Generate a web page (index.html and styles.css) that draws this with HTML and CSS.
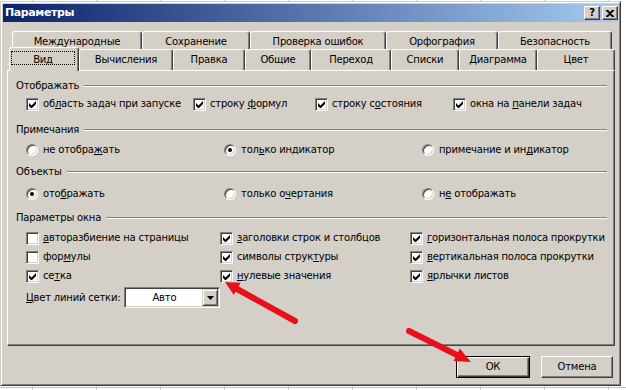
FILE: index.html
```html
<!DOCTYPE html>
<html lang="ru">
<head>
<meta charset="utf-8">
<title>Параметры</title>
<link rel="stylesheet" href="styles.css">
</head>
<body>
<div class="dialog">
  <div class="titlebar">
    <span class="title">Параметры</span>
    <div class="tb-buttons">
      <span class="tb-btn help">?</span>
      <span class="tb-btn close"><svg width="8" height="7" viewBox="0 0 8 7"><path d="M0 0h2l2 2 2-2h2v1L5 3.5 8 6v1H6L4 5 2 7H0V6l3-2.5L0 1z" fill="#000"/></svg></span>
    </div>
  </div>
  <div class="content">
    <div class="tabrow back">
      <div class="tab w130">Международные</div>
      <div class="tab w108">Сохранение</div>
      <div class="tab w136">Проверка ошибок</div>
      <div class="tab w112">Орфография</div>
      <div class="tab w114">Безопасность</div>
    </div>
    <div class="tabrow front">
      <div class="tab sel"><span class="focus">Вид</span></div>
      <div class="tab w94">Вычисления</div>
      <div class="tab w72">Правка</div>
      <div class="tab w66">Общие</div>
      <div class="tab w80">Переход</div>
      <div class="tab w68">Списки</div>
      <div class="tab w78">Диаграмма</div>
      <div class="tab w78">Цвет</div>
    </div>
    <div class="panel">
      <div class="ghead g1"><span>Отображать</span><i class="line"></i></div>
      <div class="row r1 cols4">
        <label class="item"><span class="cb on"></span><span class="t">об<u>л</u>асть задач при запуске</span></label>
        <label class="item"><span class="cb on"></span><span class="t">строку <u>ф</u>ормул</span></label>
        <label class="item"><span class="cb on"></span><span class="t">строку с<u>о</u>стояния</span></label>
        <label class="item"><span class="cb on"></span><span class="t">окна на <u>п</u>анели задач</span></label>
      </div>
      <div class="ghead g2"><span>Примечания</span><i class="line"></i></div>
      <div class="row r2 cols3">
        <label class="item"><span class="rb"></span><span class="t">не отобра<u>ж</u>ать</span></label>
        <label class="item"><span class="rb on"></span><span class="t">тол<u>ь</u>ко индикатор</span></label>
        <label class="item"><span class="rb"></span><span class="t">примечание и ин<u>д</u>икатор</span></label>
      </div>
      <div class="ghead g3"><span>Объекты</span><i class="line"></i></div>
      <div class="row r3 cols3">
        <label class="item"><span class="rb on"></span><span class="t">ото<u>б</u>ражать</span></label>
        <label class="item"><span class="rb"></span><span class="t">только о<u>ч</u>ертания</span></label>
        <label class="item"><span class="rb"></span><span class="t">н<u>е</u> отображать</span></label>
      </div>
      <div class="ghead g4"><span>Параметры окна</span><i class="line"></i></div>
      <div class="grid3">
        <label class="item"><span class="cb"></span><span class="t"><u>а</u>вторазбиение на страницы</span></label>
        <label class="item"><span class="cb on"></span><span class="t"><u>з</u>аголовки строк и столбцов</span></label>
        <label class="item"><span class="cb on"></span><span class="t"><u>г</u>оризонтальная полоса прокрутки</span></label>
        <label class="item"><span class="cb"></span><span class="t">фор<u>м</u>улы</span></label>
        <label class="item"><span class="cb on"></span><span class="t">символы струк<u>т</u>уры</span></label>
        <label class="item"><span class="cb on"></span><span class="t"><u>в</u>ертикальная полоса прокрутки</span></label>
        <label class="item"><span class="cb on"></span><span class="t">се<u>т</u>ка</span></label>
        <label class="item"><span class="cb on"></span><span class="t"><u>н</u>улевые значения</span></label>
        <label class="item"><span class="cb on"></span><span class="t"><u>я</u>рлычки листов</span></label>
      </div>
      <div class="colorrow">
        <span class="clabel"><u>Ц</u>вет линий сетки:</span>
        <div class="combo">
          <span class="cval">Авто</span>
          <span class="cbtn"><svg width="7" height="4" viewBox="0 0 7 4"><path d="M0 0h7L3.5 4z" fill="#000"/></svg></span>
        </div>
      </div>
    </div>
    <div class="buttons">
      <div class="btn default">ОК</div>
      <div class="btn cancel">Отмена</div>
    </div>
  </div>
</div>
<svg class="annot" width="626" height="390" viewBox="0 0 626 390">
  <rect x="9.5" y="64.5" width="66" height="5" rx="2.5" fill="#e8101a"/>
  <line x1="295" y1="321" x2="237" y2="289" stroke="#e8101a" stroke-width="6" stroke-linecap="round"/>
  <polygon points="225,282 240.6,282.7 233.8,294.9" fill="#e8101a"/>
  <line x1="409" y1="331" x2="457" y2="355" stroke="#e8101a" stroke-width="6" stroke-linecap="round"/>
  <polygon points="471,362 453.6,361.1 459.8,348.5" fill="#e8101a"/>
</svg>
</body>
</html>
```

FILE: styles.css
```css
* { box-sizing: border-box; }
html, body { margin: 0; padding: 0; }
body {
  width: 626px;
  height: 390px;
  overflow: hidden;
  position: relative;
  background-color: #fff;
  background-image:
    linear-gradient(180deg, transparent 0 387px, #c0c0c0 387px 388px, transparent 388px),
    repeating-linear-gradient(90deg, transparent 0 32px, #c8c8c8 32px 33px, transparent 33px 64px);
  font-family: "DejaVu Sans", sans-serif;
  font-size: 10px;
  letter-spacing: -0.2px;
  color: #000;
}
.dialog {
  margin-top: 1px;
  width: 621px;
  height: 385px;
  background: #d4d0c8;
  border: 1px solid;
  border-color: #d4d0c8 #404040 #404040 #d4d0c8;
  box-shadow: inset 1px 1px #fff, inset -1px -1px #808080;
  padding: 2px;
}
.titlebar {
  height: 18px;
  background: linear-gradient(90deg, #0a246a, #a6caf0);
  display: flex;
  align-items: center;
  justify-content: space-between;
  padding: 0 0 0 2px;
}
.title {
  color: #fff;
  font-weight: bold;
  font-size: 11px;
  letter-spacing: -0.4px;
  line-height: 18px;
}
.tb-buttons { display: flex; gap: 2px; }
.tb-btn {
  width: 16px;
  height: 14px;
  background: #d4d0c8;
  border: 1px solid;
  border-color: #fff #404040 #404040 #fff;
  box-shadow: inset -1px -1px #808080;
  display: flex;
  align-items: center;
  justify-content: center;
  font-weight: bold;
  font-size: 10px;
  line-height: 12px;
}
.content { display: flex; flex-direction: column; }
.tabrow { display: flex; }
.tabrow.back { margin: 9px 0 0 9px; width: 600px; height: 18px; }
.tabrow.front { margin: 0 0 0 7px; width: 604px; height: 21px; }
.tab {
  flex: none;
  height: 100%;
  background: #d4d0c8;
  border-top: 1px solid #fff;
  border-left: 1px solid #fff;
  border-right: 1px solid #404040;
  box-shadow: inset -1px 0 #808080;
  border-radius: 3px 3px 0 0;
  text-align: center;
  line-height: 16px;
  padding-top: 2px;
  white-space: nowrap;
}
.w130 { width: 130px; }
.w108 { width: 108px; }
.w136 { width: 136px; }
.w112 { width: 112px; }
.w114 { width: 114px; }
.w94 { width: 94px; }
.w72 { width: 72px; }
.w66 { width: 66px; }
.w80 { width: 80px; }
.w68 { width: 68px; }
.w78 { width: 78px; }
.tab.sel {
  width: 70px;
  height: 24px;
  margin: -2px 0 0 -1px;
  position: relative;
  z-index: 2;
  padding: 3px 2px 0 1px;
}
.focus {
  display: block;
  height: 14px;
  line-height: 14px;
  padding-top: 1px;
  border: 1px dotted #000;
  margin-right: 1px;
}
.panel {
  margin-left: 4px;
  width: 608px;
  height: 276px;
  border: 1px solid;
  border-color: #fff #404040 #404040 #fff;
  box-shadow: inset -1px -1px #808080;
  display: flex;
  flex-direction: column;
}
.ghead {
  height: 16px;
  display: flex;
  align-items: center;
  gap: 5px;
  padding: 0 7px 0 8px;
  line-height: 16px;
}
.ghead .line {
  flex: 1;
  height: 2px;
  border-top: 1px solid #808080;
  border-bottom: 1px solid #fff;
}
.g1 { margin-top: 7px; }
.g2 { margin-top: 10px; }
.g3 { margin-top: 6px; }
.g4 { margin-top: 8px; }
.row { height: 16px; display: grid; padding-left: 18px; }
.r1 { margin-top: 2px; grid-template-columns: 167px 122px 138px auto; }
.r2 { margin-top: 4px; grid-template-columns: 198px 198px auto; }
.r3 { margin-top: 6px; grid-template-columns: 198px 198px auto; }
.grid3 {
  margin-top: 4px;
  padding-left: 18px;
  display: grid;
  grid-template-columns: 194px 190px auto;
  grid-auto-rows: 16px;
  row-gap: 3px;
}
.item {
  display: flex;
  align-items: center;
  gap: 4px;
  line-height: 16px;
  white-space: nowrap;
}
.cb {
  flex: none;
  width: 13px;
  height: 13px;
  background: #fff;
  border: 1px solid;
  border-color: #808080 #fff #fff #808080;
  box-shadow: inset 1px 1px #404040, inset -1px -1px #d4d0c8;
  position: relative;
}
.cb.on::after {
  content: "";
  position: absolute;
  left: 2px;
  top: 2px;
  width: 7px;
  height: 7px;
  background: no-repeat center / 7px 7px url("data:image/svg+xml,%3Csvg xmlns='http://www.w3.org/2000/svg' width='7' height='7' viewBox='0 0 7 7'%3E%3Cpath d='M0 2v3l2 2h1l4-4V0L2.5 4.5z' fill='%23000'/%3E%3C/svg%3E");
}
.rb {
  flex: none;
  width: 12px;
  height: 12px;
  margin-right: 1px;
  border-radius: 50%;
  background: #fff;
  border: 1px solid;
  border-color: #808080 #fff #fff #808080;
  box-shadow: inset 1px 1px #404040, inset -1px -1px #d4d0c8;
  position: relative;
}
.rb.on::after {
  content: "";
  position: absolute;
  left: 3px;
  top: 3px;
  width: 4px;
  height: 4px;
  border-radius: 50%;
  background: #000;
}
u { text-decoration: underline; text-underline-offset: 1px; }
.colorrow {
  margin-top: 3px;
  height: 21px;
  padding-left: 18px;
  display: flex;
  align-items: center;
  gap: 4px;
}
.combo {
  width: 96px;
  height: 21px;
  background: #fff;
  border: 1px solid;
  border-color: #808080 #fff #fff #808080;
  box-shadow: inset 1px 1px #404040, inset -1px -1px #d4d0c8;
  display: flex;
  padding: 1px;
}
.cval { flex: 1; text-align: center; line-height: 17px; }
.cbtn {
  width: 16px;
  height: 17px;
  background: #d4d0c8;
  border: 1px solid;
  border-color: #d4d0c8 #404040 #404040 #d4d0c8;
  box-shadow: inset 1px 1px #fff, inset -1px -1px #808080;
  display: flex;
  align-items: center;
  justify-content: center;
}
.buttons {
  margin-top: 10px;
  display: flex;
  justify-content: flex-end;
  gap: 11px;
  padding-right: 5px;
}
.btn {
  height: 22px;
  text-align: center;
  line-height: 20px;
  background: #d4d0c8;
  border: 1px solid;
}
.btn.default {
  width: 74px;
  border-color: #000;
  box-shadow: inset 1px 1px #fff, inset -1px -1px #404040, inset -2px -2px #808080;
}
.btn.cancel {
  width: 72px;
  border-color: #fff #404040 #404040 #fff;
  box-shadow: inset -1px -1px #808080;
}
.annot {
  position: absolute;
  left: 0;
  top: 0;
  pointer-events: none;
}
```
